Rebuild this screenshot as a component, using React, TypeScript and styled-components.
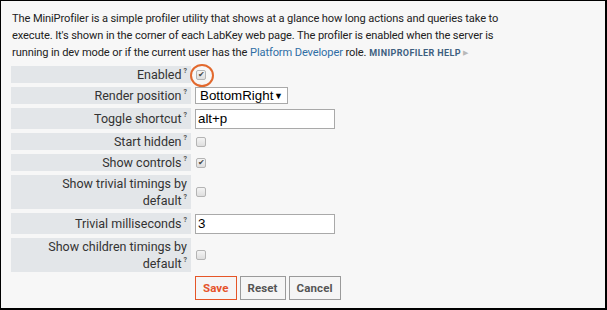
import { Fragment } from 'react';
import styled, { createGlobalStyle } from 'styled-components';

const GlobalStyle = createGlobalStyle`
  html, body { margin: 0; padding: 0; background: #fff; }
  body { font-family: Roboto, "Liberation Sans", sans-serif; }
`;

const Frame = styled.div`
  box-sizing: border-box;
  width: 607px;
  height: 310px;
  background: #f7f7f7;
  border: 1px solid #000;
  border-right-width: 2px;
  border-bottom-width: 2px;
  padding: 9px 10px 0 10px;
  color: #222;
  overflow: hidden;
`;

const Intro = styled.p`
  margin: 0 0 4px 1px;
  font-size: 11.1px;
  letter-spacing: -0.12px;
  line-height: 17px;
  white-space: nowrap;
`;

const Link = styled.a`
  color: #2f6ea5;
  text-decoration: none;
`;

const HelpLink = styled.span`
  margin-left: 3px;
  font-size: 9px;
  font-weight: 700;
  letter-spacing: 0.4px;
  color: #3e5f80;
`;

const HelpArrow = styled.span`
  display: inline-block;
  margin-left: 2px;
  font-size: 7px;
  line-height: 8px;
  vertical-align: 1px;
  color: #b9b9b9;
`;

const Form = styled.div`
  display: grid;
  grid-template-columns: 180px auto;
  column-gap: 4px;
  row-gap: 4px;
  justify-items: start;
`;

const Label = styled.div<{ $tall?: boolean }>`
  justify-self: stretch;
  box-sizing: border-box;
  background: #e3e6e9;
  text-align: right;
  padding: 0 4px 0 24px;
  font-size: 12.5px;
  line-height: 17px;
  min-height: ${(p) => (p.$tall ? '21px' : '17px')};
  display: flex;
  align-items: center;
  justify-content: flex-end;
  color: #333;
`;

const Hint = styled.sup`
  font-size: 7px;
  font-weight: 700;
  line-height: 0;
  margin-left: 2px;
  vertical-align: 6px;
  color: #555;
`;

const Field = styled.div`
  position: relative;
  display: flex;
  align-items: center;
`;

const Box = styled.span`
  box-sizing: border-box;
  display: inline-flex;
  align-items: center;
  justify-content: center;
  width: 10px;
  height: 10px;
  margin-left: 1px;
  border: 1px solid #b4b4b4;
  border-radius: 2px;
  background: linear-gradient(#f4f4f4, #dedede);
  font-size: 8px;
  line-height: 1;
  color: #444;
`;

const Ring = styled.span`
  position: absolute;
  left: -5px;
  top: 50%;
  width: 20px;
  height: 19px;
  margin-top: -11px;
  border: 2px solid #e2692e;
  border-radius: 50%;
`;

const SelectBox = styled.div`
  box-sizing: border-box;
  width: 93px;
  height: 17px;
  border: 1px solid #a9a9a9;
  background: #fff;
  display: flex;
  align-items: center;
  justify-content: space-between;
  padding: 0 4px 0 4px;
  font-family: "Liberation Sans", Arial, sans-serif;
  font-size: 13.33px;
  color: #000;
`;

const Caret = styled.span`
  font-size: 9px;
`;

const TextInput = styled.input`
  box-sizing: border-box;
  width: 140px;
  height: 20px;
  border: 1px solid #a9a9a9;
  background: #fff;
  padding: 0 2px;
  font-family: "Liberation Sans", Arial, sans-serif;
  font-size: 13.33px;
  color: #000;
  outline: none;
`;

const Buttons = styled.div`
  grid-column: 2;
  display: flex;
  gap: 3px;
`;

const Button = styled.button<{ $primary?: boolean }>`
  box-sizing: border-box;
  height: 24px;
  padding: 0 7px;
  background: #f5f5f5;
  border: 1px solid ${(p) => (p.$primary ? '#e55527' : '#9a9a9a')};
  color: ${(p) => (p.$primary ? '#e5532a' : '#555')};
  font-family: Roboto, "Liberation Sans", sans-serif;
  font-size: 11.5px;
  font-weight: 700;
  letter-spacing: 0.1px;
  border-radius: 0;
`;

type Row =
  | { label: string; kind: 'check'; checked?: boolean; ring?: boolean }
  | { label: string; kind: 'select'; value: string }
  | { label: string; kind: 'text'; value: string };

const rows: Row[] = [
  { label: 'Enabled', kind: 'check', checked: true, ring: true },
  { label: 'Render position', kind: 'select', value: 'BottomRight' },
  { label: 'Toggle shortcut', kind: 'text', value: 'alt+p' },
  { label: 'Start hidden', kind: 'check' },
  { label: 'Show controls', kind: 'check', checked: true },
  { label: 'Show trivial timings by default', kind: 'check' },
  { label: 'Trivial milliseconds', kind: 'text', value: '3' },
  { label: 'Show children timings by default', kind: 'check' },
];

export default function App() {
  return (
    <>
      <GlobalStyle />
      <Frame>
        <Intro>
          The MiniProfiler is a simple profiler utility that shows at a glance how long actions and queries take to
          <br />
          execute. It's shown in the corner of each LabKey web page. The profiler is enabled when the server is
          <br />
          running in dev mode or if the current user has the <Link>Platform Developer</Link> role.
          <HelpLink>MINIPROFILER HELP</HelpLink>
          <HelpArrow>▶</HelpArrow>
        </Intro>
        <Form>
          {rows.map((r) => (
            <Fragment key={r.label}>
              <Label $tall={r.kind === 'text'}>
                <span>
                  {r.label}
                  <Hint>?</Hint>
                </span>
              </Label>
              <Field>
                {r.kind === 'check' && (
                  <>
                    <Box>{r.checked ? '✔' : ''}</Box>
                    {r.ring && <Ring />}
                  </>
                )}
                {r.kind === 'select' && (
                  <SelectBox>
                    {r.value}
                    <Caret>▼</Caret>
                  </SelectBox>
                )}
                {r.kind === 'text' && <TextInput defaultValue={r.value} />}
              </Field>
            </Fragment>
          ))}
          <Buttons>
            <Button $primary>Save</Button>
            <Button>Reset</Button>
            <Button>Cancel</Button>
          </Buttons>
        </Form>
      </Frame>
    </>
  );
}
